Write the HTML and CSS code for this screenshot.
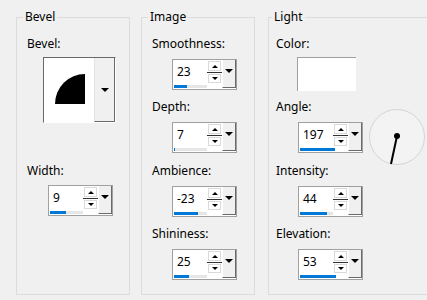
FILE: index.html
```html
<!DOCTYPE html>
<html lang="en">
<head>
  <meta charset="UTF-8" />
  <title>Inner Bevel</title>
  <link rel="stylesheet" href="styles.css">
</head>
<body>
  <div class="dialog">

    <fieldset class="group group-bevel">
      <legend>Bevel</legend>
      <div class="field field-bevel">
        <div class="label">Bevel:</div>
        <div class="bevel-pick">
          <div class="bevel-preview"><div class="bevel-shape"></div></div>
          <div class="bevel-drop"><span class="tri-down big"></span></div>
        </div>
      </div>
      <div class="field field-width">
        <div class="label">Width:</div>
        <div class="spin">
          <div class="spin-field">
            <span class="spin-value">9</span>
            <div class="spin-track"><div class="spin-fill" style="width: 16px"></div></div>
          </div>
          <div class="spin-arrows">
            <div class="spin-btn"><span class="tri-up"></span></div>
            <div class="spin-sep"></div>
            <div class="spin-btn"><span class="tri-down"></span></div>
          </div>
          <div class="spin-drop"><span class="tri-down big"></span></div>
        </div>
      </div>
    </fieldset>

    <fieldset class="group group-image">
      <legend>Image</legend>
      <div class="field">
        <div class="label">Smoothness:</div>
        <div class="spin">
          <div class="spin-field">
            <span class="spin-value">23</span>
            <div class="spin-track"><div class="spin-fill" style="width: 13px"></div></div>
          </div>
          <div class="spin-arrows">
            <div class="spin-btn"><span class="tri-up"></span></div>
            <div class="spin-sep"></div>
            <div class="spin-btn"><span class="tri-down"></span></div>
          </div>
          <div class="spin-drop"><span class="tri-down big"></span></div>
        </div>
      </div>
      <div class="field tall">
        <div class="label">Depth:</div>
        <div class="spin">
          <div class="spin-field">
            <span class="spin-value">7</span>
            <div class="spin-track"><div class="spin-fill" style="width: 1px"></div></div>
          </div>
          <div class="spin-arrows">
            <div class="spin-btn"><span class="tri-up"></span></div>
            <div class="spin-sep"></div>
            <div class="spin-btn"><span class="tri-down"></span></div>
          </div>
          <div class="spin-drop"><span class="tri-down big"></span></div>
        </div>
      </div>
      <div class="field">
        <div class="label">Ambience:</div>
        <div class="spin">
          <div class="spin-field">
            <span class="spin-value">-23</span>
            <div class="spin-track"><div class="spin-fill" style="width: 24px"></div></div>
          </div>
          <div class="spin-arrows">
            <div class="spin-btn"><span class="tri-up"></span></div>
            <div class="spin-sep"></div>
            <div class="spin-btn"><span class="tri-down"></span></div>
          </div>
          <div class="spin-drop"><span class="tri-down big"></span></div>
        </div>
      </div>
      <div class="field">
        <div class="label">Shininess:</div>
        <div class="spin">
          <div class="spin-field">
            <span class="spin-value">25</span>
            <div class="spin-track"><div class="spin-fill" style="width: 15px"></div></div>
          </div>
          <div class="spin-arrows">
            <div class="spin-btn"><span class="tri-up"></span></div>
            <div class="spin-sep"></div>
            <div class="spin-btn"><span class="tri-down"></span></div>
          </div>
          <div class="spin-drop"><span class="tri-down big"></span></div>
        </div>
      </div>
    </fieldset>

    <fieldset class="group group-light">
      <legend>Light</legend>
      <div class="field field-color">
        <div class="label">Color:</div>
        <div class="swatch"></div>
      </div>
      <div class="field tall">
        <div class="label">Angle:</div>
        <div class="angle-row">
          <div class="spin">
            <div class="spin-field">
              <span class="spin-value">197</span>
              <div class="spin-track"><div class="spin-fill" style="width: 35px"></div></div>
            </div>
            <div class="spin-arrows">
              <div class="spin-btn"><span class="tri-up"></span></div>
              <div class="spin-sep"></div>
              <div class="spin-btn"><span class="tri-down"></span></div>
            </div>
            <div class="spin-drop"><span class="tri-down big"></span></div>
          </div>
          <svg class="dial" width="57" height="57" viewBox="0 0 57 57">
            <circle cx="28" cy="28" r="27.5" fill="#f3f3f3" stroke="#d4d4d4" stroke-width="1"/>
            <line x1="28" y1="27" x2="22" y2="55" stroke="#000" stroke-width="2"/>
            <circle cx="28" cy="27" r="3" fill="#000"/>
          </svg>
        </div>
      </div>
      <div class="field">
        <div class="label">Intensity:</div>
        <div class="spin">
          <div class="spin-field">
            <span class="spin-value">44</span>
            <div class="spin-track"><div class="spin-fill" style="width: 27px"></div></div>
          </div>
          <div class="spin-arrows">
            <div class="spin-btn"><span class="tri-up"></span></div>
            <div class="spin-sep"></div>
            <div class="spin-btn"><span class="tri-down"></span></div>
          </div>
          <div class="spin-drop"><span class="tri-down big"></span></div>
        </div>
      </div>
      <div class="field">
        <div class="label">Elevation:</div>
        <div class="spin">
          <div class="spin-field">
            <span class="spin-value">53</span>
            <div class="spin-track"><div class="spin-fill" style="width: 36px"></div></div>
          </div>
          <div class="spin-arrows">
            <div class="spin-btn"><span class="tri-up"></span></div>
            <div class="spin-sep"></div>
            <div class="spin-btn"><span class="tri-down"></span></div>
          </div>
          <div class="spin-drop"><span class="tri-down big"></span></div>
        </div>
      </div>
    </fieldset>

  </div>
</body>
</html>
```

FILE: styles.css
```css
body {
  margin: 0;
  background-color: #f0f0f0;
  color: #000;
  font-family: 'Noto Sans', sans-serif;
  font-size: 12px;
  line-height: 16px;
  overflow: hidden;
}
.dialog {
  display: flex;
  align-items: flex-start;
  padding: 9px 0 0 16px;
  width: 700px;
}
.group {
  box-sizing: border-box;
  margin: 0;
  height: 286px;
  width: 114px;
  border: 1px solid #dcdcdc;
  padding: 11px 0 0 10px;
  min-width: 0;
}
.group legend {
  padding: 0 2px;
  margin-left: -4px;
  line-height: 16px;
}
.group-image {
  margin-left: 11px;
}
.group-light {
  margin-left: 13px;
  width: 200px;
  padding-left: 7px;
}
.field {
  height: 63px;
}
.field.tall {
  height: 64px;
}
.label {
  height: 16px;
}
.field .spin {
  margin: 7px 0 0 20px;
}
.group-light .field .spin {
  margin-left: 22px;
}

/* bevel picker */
.field-bevel {
  height: 127px;
}
.field-width .spin {
  margin: 6px 0 0 21px;
}
.bevel-pick {
  display: flex;
  box-sizing: border-box;
  width: 73px;
  height: 66px;
  margin: 5px 0 0 16px;
  border-top: 1px solid #696969;
  border-left: 1px solid #696969;
  border-right: 1px solid #fff;
  border-bottom: 1px solid #fff;
}
.bevel-preview {
  width: 50px;
  background-color: #fff;
}
.bevel-shape {
  width: 30px;
  height: 30px;
  margin: 16px 0 0 11px;
  background-color: #000;
  border-top-left-radius: 30px;
}
.bevel-drop {
  flex: 1;
  display: flex;
  align-items: center;
  justify-content: center;
  border-left: 1px solid #e3e3e3;
  border-right: 1px solid #696969;
  border-bottom: 1px solid #696969;
}

/* spin control */
.spin {
  display: flex;
  box-sizing: border-box;
  width: 65px;
  height: 31px;
  border: 1px solid #a0a0a0;
  background-color: #fff;
}
.spin-field {
  width: 34px;
  display: flex;
  flex-direction: column;
}
.spin-value {
  padding: 4px 0 0 4px;
}
.spin-track {
  margin: auto 0 1px 1px;
  width: 33px;
  height: 3px;
  background-color: #e6e6e6;
}
.spin-fill {
  height: 3px;
  background-color: #0078d7;
}
.spin-arrows {
  width: 15px;
  display: flex;
  flex-direction: column;
  align-items: center;
}
.spin-btn {
  box-sizing: border-box;
  width: 13px;
  height: 10px;
  margin-top: 1px;
  border: 1px solid #dadada;
  display: flex;
  align-items: center;
  justify-content: center;
}
.spin-btn + .spin-sep + .spin-btn {
  height: 9px;
}
.spin-sep {
  width: 15px;
  height: 1px;
  margin-top: 1px;
  background-color: #333;
}
.spin-drop {
  box-sizing: border-box;
  width: 15px;
  height: 28px;
  background-color: #f0f0f0;
  border-left: 1px solid #fff;
  border-right: 1px solid #696969;
  border-bottom: 1px solid #696969;
  display: flex;
  justify-content: center;
  padding-top: 9px;
}
.tri-up {
  width: 0;
  height: 0;
  border-left: 3px solid transparent;
  border-right: 3px solid transparent;
  border-bottom: 3px solid #000;
}
.tri-down {
  width: 0;
  height: 0;
  border-left: 3px solid transparent;
  border-right: 3px solid transparent;
  border-top: 3px solid #000;
}
.tri-down.big {
  border-left-width: 4px;
  border-right-width: 4px;
  border-top-width: 4px;
}

/* light */
.swatch {
  box-sizing: border-box;
  width: 59px;
  height: 34px;
  margin: 5px 0 0 21px;
  background-color: #fff;
  border-top: 1px solid #a0a0a0;
  border-left: 1px solid #a0a0a0;
}
.angle-row {
  display: flex;
  align-items: flex-start;
}
.dial {
  margin: -6px 0 0 6px;
}
```
